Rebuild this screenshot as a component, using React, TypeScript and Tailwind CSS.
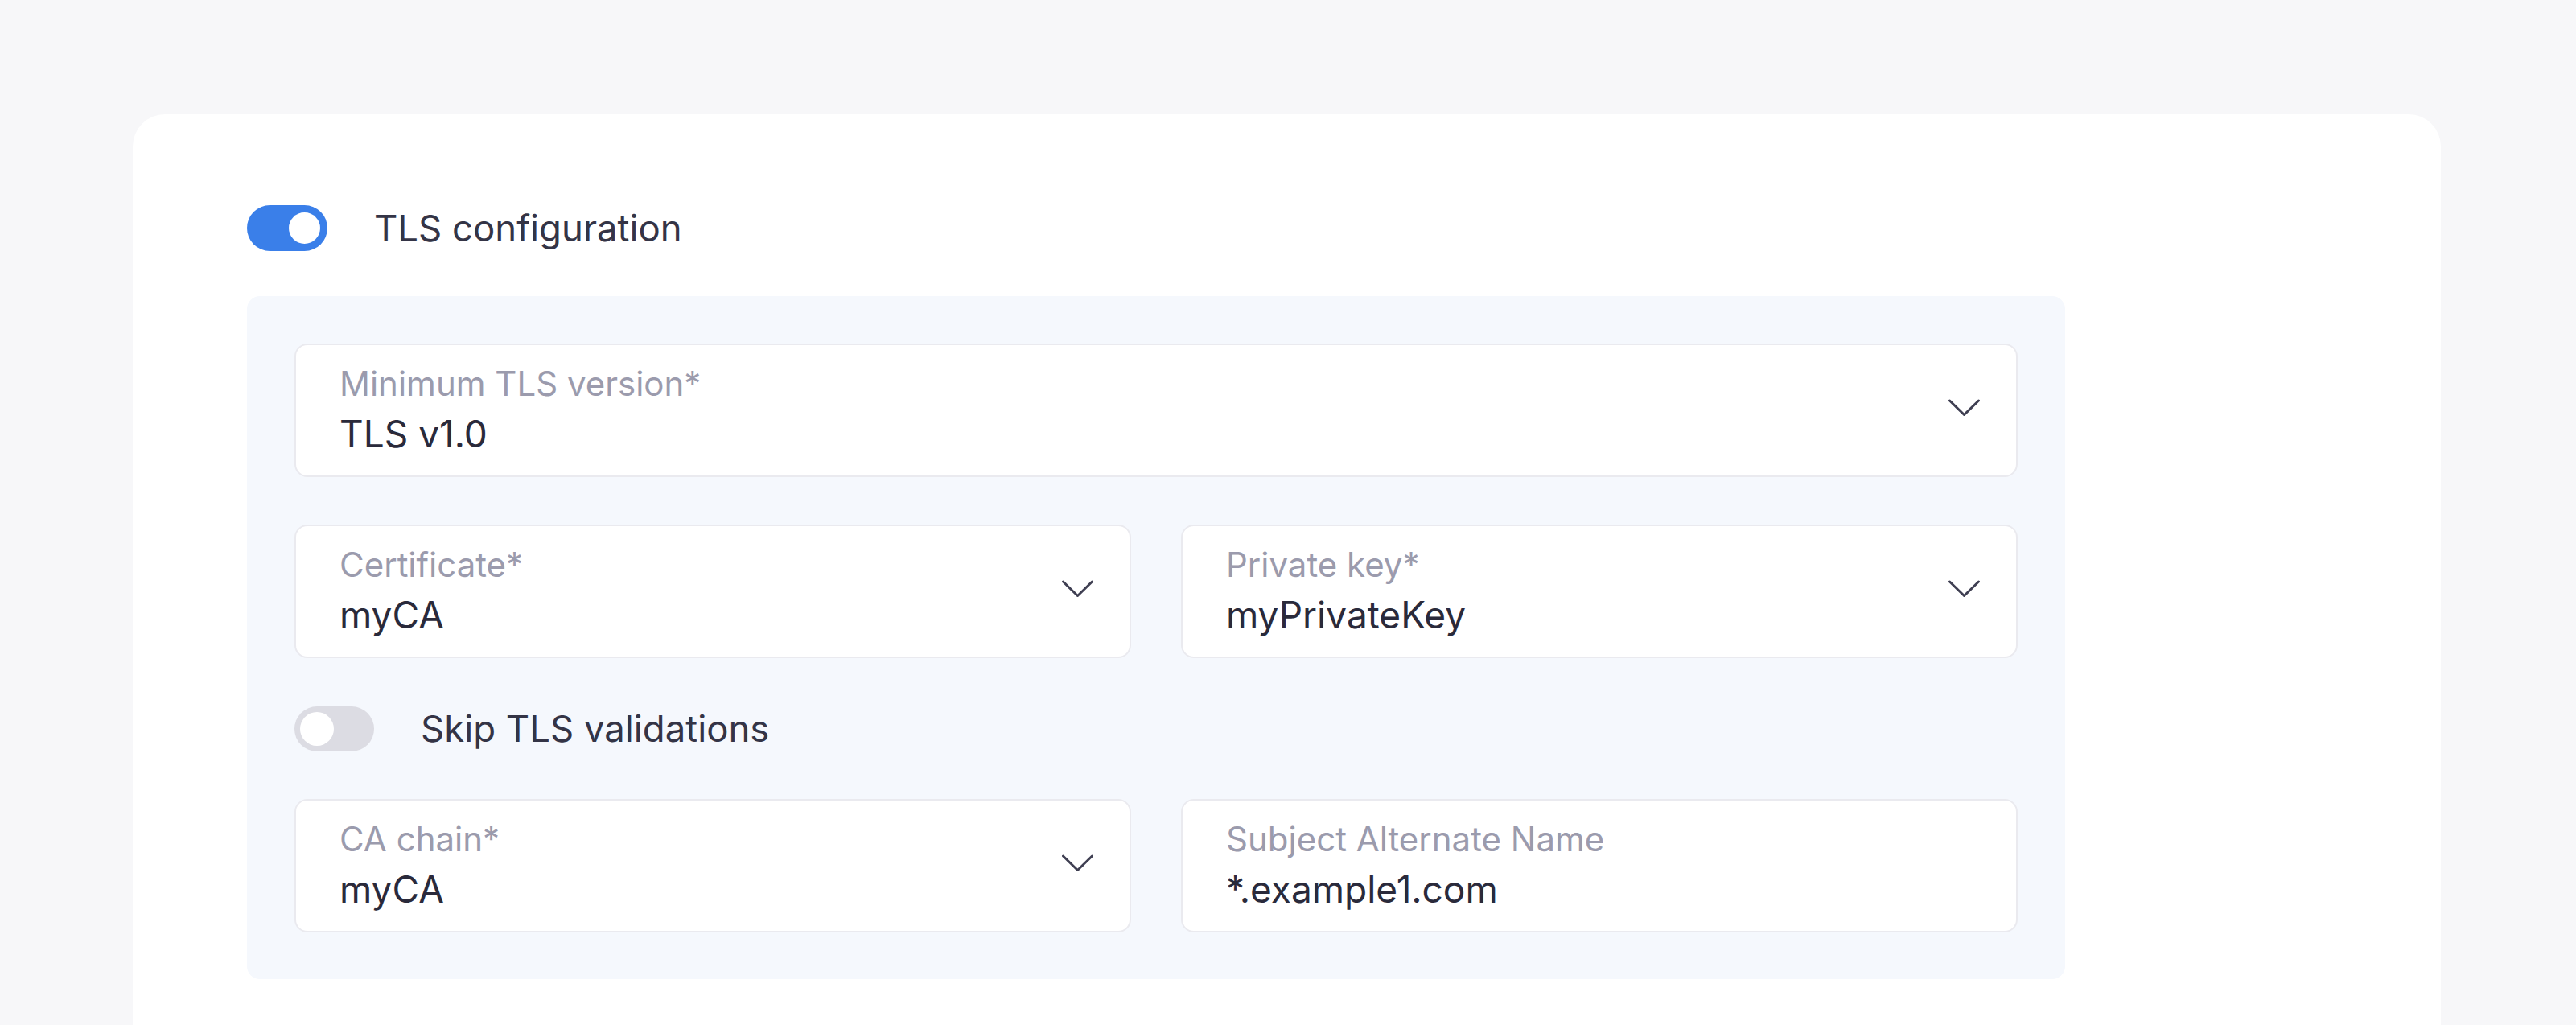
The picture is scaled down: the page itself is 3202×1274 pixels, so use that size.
import React from 'react'

const Chevron = () => (
  <svg width="39" height="22" viewBox="0 0 39 22" fill="none" className="shrink-0 mb-[6px]">
    <path d="M1.5 2 L19.5 19.5 L37.5 2" stroke="#3f3f52" strokeWidth="3" strokeLinecap="round" strokeLinejoin="round" />
  </svg>
)

const Toggle = ({ on }: { on: boolean }) =>
  on ? (
    <div className="w-[100px] h-[57px] rounded-full bg-[#3a7fe9] flex items-center justify-end pr-[9px] shrink-0">
      <div className="w-[39px] h-[39px] rounded-full bg-white" />
    </div>
  ) : (
    <div className="w-[99px] h-[56px] rounded-full bg-[#dcdce3] flex items-center justify-start pl-[7px] shrink-0">
      <div className="w-[42px] h-[42px] rounded-full bg-white" />
    </div>
  )

const Field = ({ label, value, select = true }: { label: string; value: string; select?: boolean }) => (
  <div className="h-[166px] bg-white border-2 border-[#eaeaef] rounded-[16px] pl-[54px] pr-[45px] flex items-center">
    <div className="flex-1 flex flex-col pt-[23px] pb-[25px] self-stretch">
      <span className="text-[42px] leading-[50px] text-[#9b9bad]">{label}</span>
      <span className="mt-[10px] text-[46px] leading-[54px] text-[#2a2a3b]">{value}</span>
    </div>
    {select && <Chevron />}
  </div>
)

const ToggleRow = ({ on, label }: { on: boolean; label: string }) => (
  <div className="flex items-center gap-[58px]">
    <Toggle on={on} />
    <span className="text-[45.5px] leading-[57px] text-[#343446]">{label}</span>
  </div>
)

export default function App() {
  return (
    <div
      className="h-[1274px] overflow-hidden bg-[#f7f7f9] pt-[142px] pl-[165px] pr-[168px]"
      style={{ fontFamily: 'Inter, "Noto Sans", sans-serif' }}
    >
      <div className="bg-white rounded-[40px] h-[1300px] pt-[113px] pl-[142px]">
        <ToggleRow on label="TLS configuration" />
        <div className="mt-[56px] w-[2260px] bg-[#f5f8fd] rounded-[16px] px-[59px] pt-[59px] pb-[58px] flex flex-col gap-[59px]">
          <Field label="Minimum TLS version*" value="TLS v1.0" />
          <div className="grid grid-cols-2 gap-[62px]">
            <Field label="Certificate*" value="myCA" />
            <Field label="Private key*" value="myPrivateKey" />
          </div>
          <ToggleRow on={false} label="Skip TLS validations" />
          <div className="grid grid-cols-2 gap-[62px]">
            <Field label="CA chain*" value="myCA" />
            <Field label="Subject Alternate Name" value="*.example1.com" select={false} />
          </div>
        </div>
      </div>
    </div>
  )
}
